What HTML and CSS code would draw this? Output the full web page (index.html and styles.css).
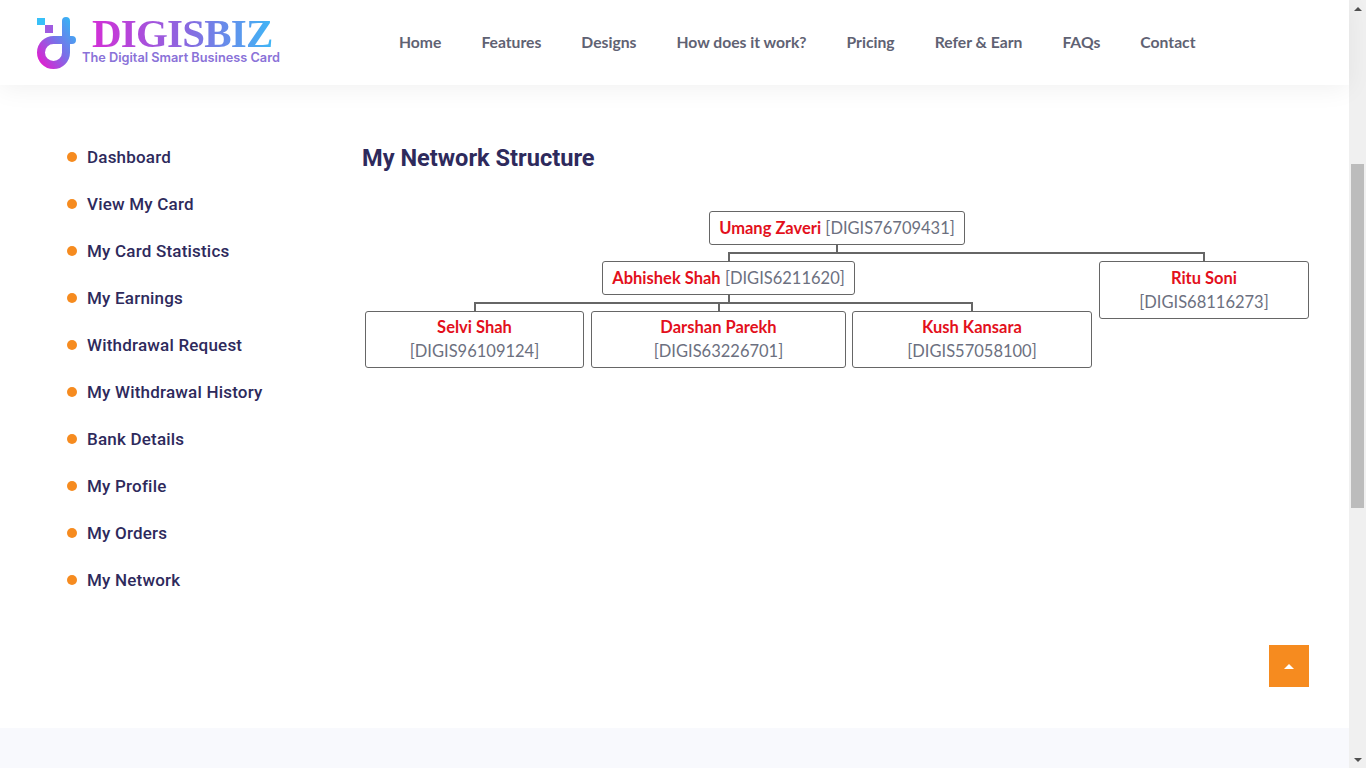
FILE: index.html
```html
<!DOCTYPE html>
<html lang="en">
<head>
<meta charset="utf-8">
<title>My Network Structure</title>
<link rel="stylesheet" href="styles.css">
</head>
<body>
<div class="page">
  <header class="site-header">
    <a class="logo" href="#">
      <svg class="logo-mark" width="42" height="54" viewBox="0 0 42 54">
        <defs>
          <linearGradient id="lg" x1="0" y1="1" x2="1" y2="0">
            <stop offset="0" stop-color="#e01fd0"/>
            <stop offset=".5" stop-color="#7a6fe8"/>
            <stop offset="1" stop-color="#35b5f5"/>
          </linearGradient>
        </defs>
        <rect x="1" y="2" width="8" height="7" fill="#38c0f8"/>
        <rect x="9" y="9" width="8" height="8" fill="#a05be0"/>
        <path d="M30 5V36.500A12.500 12.500 0 1 1 17.500 24H36" fill="none" stroke="url(#lg)" stroke-width="8" stroke-linecap="round"/>
      </svg>
      <span class="logo-text">
        <span class="logo-name">DIGISBIZ</span>
        <span class="logo-tag">The Digital Smart Business Card</span>
      </span>
    </a>
    <nav class="main-nav">
      <a href="#">Home</a>
      <a href="#">Features</a>
      <a href="#">Designs</a>
      <a href="#">How does it work?</a>
      <a href="#">Pricing</a>
      <a href="#">Refer &amp; Earn</a>
      <a href="#">FAQs</a>
      <a href="#">Contact</a>
    </nav>
  </header>

  <main class="content">
    <ul class="side-menu">
      <li><a href="#">Dashboard</a></li>
      <li><a href="#">View My Card</a></li>
      <li><a href="#">My Card Statistics</a></li>
      <li><a href="#">My Earnings</a></li>
      <li><a href="#">Withdrawal Request</a></li>
      <li><a href="#">My Withdrawal History</a></li>
      <li><a href="#">Bank Details</a></li>
      <li><a href="#">My Profile</a></li>
      <li><a href="#">My Orders</a></li>
      <li><a href="#">My Network</a></li>
    </ul>
    <section class="network">
      <h2>My Network Structure</h2>
      <div class="tree">
        <div class="branch root">
          <div class="node"><b>Umang Zaveri</b> [DIGIS76709431]</div>
          <div class="kids">
            <div class="branch first parent">
              <div class="node"><b>Abhishek Shah</b> [DIGIS6211620]</div>
              <div class="kids">
                <div class="branch first wide-gap"><div class="node stacked w-selvi"><b>Selvi Shah</b><span>[DIGIS96109124]</span></div></div>
                <div class="branch middle"><div class="node stacked w-darshan"><b>Darshan Parekh</b><span>[DIGIS63226701]</span></div></div>
                <div class="branch last"><div class="node stacked w-kush"><b>Kush Kansara</b><span>[DIGIS57058100]</span></div></div>
              </div>
            </div>
            <div class="branch last sibling"><div class="node stacked w-ritu"><b>Ritu Soni</b><span>[DIGIS68116273]</span></div></div>
          </div>
        </div>
      </div>
    </section>
  </main>

  <footer class="site-footer"></footer>
  <a class="to-top" href="#" aria-label="Back to top"></a>
</div>
<div class="scrollbar">
  <span class="arrow up"></span>
  <span class="track"><span class="thumb"></span></span>
  <span class="arrow down"></span>
</div>
</body>
</html>
```
FILE: styles.css
```css
* { box-sizing: border-box; }
html, body { margin: 0; height: 100%; overflow: hidden; }
body { display: flex; background: #fff; font-family: "Lato", "Noto Sans", sans-serif; }
a { text-decoration: none; color: inherit; }

.page { position: relative; flex: 1; min-width: 0; height: 768px; display: flex; flex-direction: column; }

.site-header { height: 85px; display: flex; align-items: center; padding-left: 36px; background: #fff; box-shadow: 0 4px 24px rgba(0,0,0,.06); }
.logo { display: flex; width: 363px; flex: none; align-items: center; height: 56px; }
.logo-mark { flex: none; }
.logo-text { display: flex; flex-direction: column; margin-left: 4px; margin-top: -5px; }
.logo-name { margin-left: 10px; font: 700 41px/36px "Liberation Serif", serif; letter-spacing: -0.8px; height: 36px; background: linear-gradient(90deg, #d22fd6, #8a68e0 50%, #38bdf8); -webkit-background-clip: text; background-clip: text; color: transparent; }
.logo-tag { font: 600 12.750px/14px "Inter", sans-serif; color: #8a72d8; white-space: nowrap; }

.main-nav { display: flex; gap: 40px; padding-bottom: 2px; font: 700 15.700px/24px "Lato", sans-serif; color: #5f6273; }

.content { flex: 1; display: flex; padding: 49px 40px 0 67px; }
.side-menu { list-style: none; margin: 0; padding: 0; width: 295px; flex: none; font: 500 17px/47px "Roboto", sans-serif; letter-spacing: .2px; color: #2e2a5c; }
.side-menu li { display: flex; align-items: center; gap: 10px; }
.side-menu li::before { content: ""; width: 10px; height: 10px; margin-bottom: 1px; border-radius: 50%; background: #f68b1f; }

.network { flex: 1; min-width: 0; }
.network h2 { margin: 8px 0 0; font: 700 23.600px/32px "Roboto", sans-serif; color: #2e2a5c; }
.tree { margin-top: 37px; display: flex; font: 400 16.500px/24px "Lato", sans-serif; color: #6c7080; }

.branch { display: flex; flex-direction: column; align-items: center; position: relative; padding: 8px 3px 0; flex: none; }
.branch.root { padding: 0; }
.branch.parent { padding-left: 0; padding-right: 0; }
.branch.sibling { padding-left: 4px; }
.branch.wide-gap { padding-right: 4px; }
.branch:not(.root)::before { content: ""; position: absolute; top: -1px; left: calc(50% - 1px); width: 2px; height: 9px; background: #666; }
.branch.first::after, .branch.last::after, .branch.middle::after { content: ""; position: absolute; top: -1px; height: 2px; background: #666; }
.branch.first::after { left: calc(50% - 1px); right: 0; }
.branch.middle::after { left: 0; right: 0; }
.branch.last::after { left: 0; right: calc(50% - 1px); }

.kids { display: flex; align-items: flex-start; margin-top: 8px; position: relative; }
.kids::before { content: ""; position: absolute; top: -8px; left: calc(50% - 1px); width: 2px; height: 8px; background: #666; }

.node { border: 1px solid #666; border-radius: 3px; padding: 4px 9px; text-align: center; white-space: nowrap; background: #fff; position: relative; z-index: 1; }
.node b { font-weight: 700; color: #e3101c; }
.stacked { display: flex; flex-direction: column; }
.parent .stacked { padding-top: 3px; }
.w-selvi { width: 219px; }
.w-darshan { width: 255px; }
.w-kush { width: 240px; }
.w-ritu { width: 210px; }

.site-footer { height: 40px; flex: none; background: #f8f9fd; }
.to-top { position: absolute; left: 1269px; top: 645px; width: 40px; height: 42px; background: #f68b1f; display: flex; align-items: center; justify-content: center; }
.to-top::before { content: ""; border-left: 5px solid transparent; border-right: 5px solid transparent; border-bottom: 5px solid #fff; }

.scrollbar { width: 17px; flex: none; height: 768px; background: #f0f0f0; display: flex; flex-direction: column; align-items: center; }
.arrow { height: 17px; flex: none; display: flex; align-items: center; }
.arrow::before { content: ""; border-left: 4px solid transparent; border-right: 4px solid transparent; }
.arrow.up::before { border-bottom: 4px solid #505050; }
.arrow.down::before { border-top: 4px solid #505050; }
.track { flex: 1; width: 100%; padding: 147px 2px 0 2px; display: flex; }
.thumb { flex: none; width: 100%; height: 344px; background: #bcbcbc; }
```
